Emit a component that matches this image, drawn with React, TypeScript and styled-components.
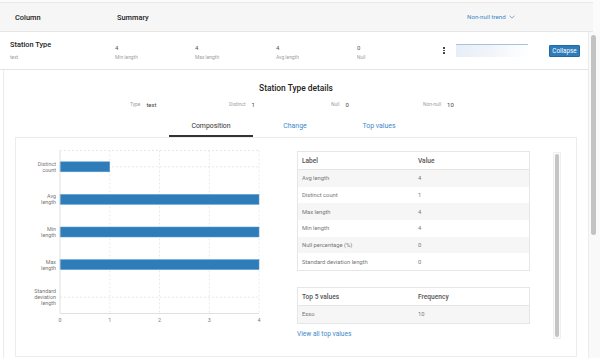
import React from 'react';
import styled, { createGlobalStyle } from 'styled-components';

const Global = createGlobalStyle`
  html, body { margin: 0; padding: 0; background: #fff; }
  body { font-family: Roboto, "Noto Sans", Arial, sans-serif; color: #333; overflow: hidden; }
  * { box-sizing: border-box; }
`;

const Page = styled.div`
  width: 600px;
  height: 358px;
  overflow: hidden;
  display: flex;
  flex-direction: column;
  padding-top: 2px;
  background: #fbfbfb;
`;

const Header = styled.div`
  height: 30px;
  margin-right: 7px;
  background: #f6f6f6;
  border-top: 1px solid #e9e9e9;
  border-bottom: 1px solid #e6e6e6;
  display: grid;
  grid-template-columns: 102px 350px 1fr;
  align-items: center;
  padding-left: 15px;
`;

const HeadCell = styled.div`
  font-size: 7.4px;
  font-weight: 500;
  color: #222;
`;

const TrendSelect = styled.div`
  font-size: 6.2px;
  color: #3d8acb;
  display: flex;
  align-items: center;
  gap: 3px;
`;

const Body = styled.div`
  flex: 1;
  display: flex;
  min-height: 0;
`;

const Main = styled.div`
  flex: 1;
  display: flex;
  flex-direction: column;
  background: #fff;
`;

const Track = styled.div`
  width: 12px;
  background: #f9f9f9;
  border-left: 1px solid #ececec;
  padding: 3px 0 0 2px;
`;

const Thumb = styled.div`
  width: 5px;
  height: 200px;
  border-radius: 3px;
  background: #c2c2c2;
`;

const Row = styled.div`
  height: 38px;
  border-bottom: 1px solid #e4e4e4;
  display: grid;
  grid-template-columns: 105px 80px 81px 81px 86px 13px 72px 21px 31px;
  align-items: center;
  padding-left: 10px;
  background: #fff;
`;

const NameBlock = styled.div`
  display: flex;
  flex-direction: column;
  gap: 5px;
  margin-top: -2px;
`;

const ColName = styled.div`
  font-size: 7.4px;
  font-weight: 500;
  color: #222;
`;

const SubLabel = styled.div`
  font-size: 4.9px;
  color: #a0a0a0;
`;

const Metric = styled.div`
  display: flex;
  flex-direction: column;
  gap: 3px;
  margin-top: 3px;
`;

const MetricValue = styled.div`
  font-size: 6px;
  color: #555;
`;

const Kebab = styled.div`
  display: flex;
  flex-direction: column;
  gap: 1px;
  align-items: flex-start;
  span {
    width: 1.6px;
    height: 1.6px;
    background: #444;
    display: block;
  }
`;

const Trend = styled.div`
  height: 13px;
  border-top: 1px solid #a8c2da;
  background: linear-gradient(to right, #e6eef7, #f1f5fa 50%, #ffffff);
`;

const CollapseBtn = styled.button`
  grid-column: 9;
  height: 12px;
  width: 31px;
  padding: 0;
  font-family: inherit;
  font-size: 6.3px;
  color: #fff;
  background: #2f7cba;
  border: 1px solid #2269a3;
  border-radius: 1px;
`;

const Details = styled.div`
  flex: 1;
  margin-left: 3px;
  border-left: 1px solid #ebebeb;
  display: flex;
  flex-direction: column;
  align-items: stretch;
  padding-top: 13px;
`;

const Title = styled.div`
  text-align: center;
  font-size: 8.4px;
  font-weight: 500;
  line-height: 10px;
  color: #222;
`;

const Stats = styled.div`
  margin-top: 6px;
  height: 10px;
  display: grid;
  grid-template-columns: 99px 102px 92px 100px;
  padding-left: 126px;
  align-items: center;
`;

const Stat = styled.div`
  display: flex;
  align-items: center;
  gap: 6px;
`;

const StatLabel = styled.span`
  font-size: 4.9px;
  color: #a0a0a0;
`;

const StatValue = styled.span`
  font-size: 6px;
  color: #444;
`;

const Tabs = styled.div`
  margin-top: 8px;
  display: flex;
  justify-content: center;
  padding-right: 2px;
`;

const Tab = styled.div<{ $active?: boolean }>`
  width: 84px;
  height: 20px;
  display: flex;
  align-items: center;
  justify-content: center;
  font-size: 6.9px;
  color: ${p => (p.$active ? '#333' : '#3d8acb')};
  border-bottom: 2px solid ${p => (p.$active ? '#333' : 'transparent')};
`;

const Card = styled.div`
  margin: 0 11px;
  height: 220px;
  border: 1px solid #ececec;
  display: grid;
  grid-template-columns: 281px 233px 1fr;
`;

const ChartSvg = styled.svg`
  display: block;
`;

const Tables = styled.div`
  padding-top: 13px;
  display: flex;
  flex-direction: column;
`;

const Table = styled.div<{ $gap?: number }>`
  border: 1px solid #e6e6e6;
  margin-top: ${p => p.$gap ?? 0}px;
`;

const TRow = styled.div<{ $head?: boolean; $shade?: boolean; $h?: number }>`
  height: ${p => p.$h ?? 16.7}px;
  display: grid;
  grid-template-columns: 116px 1fr;
  align-items: center;
  padding-left: 4px;
  background: ${p => (p.$shade ? '#f6f6f6' : '#fff')};
  border-bottom: ${p => (p.$head ? '1px solid #e6e6e6' : 'none')};
  font-size: ${p => (p.$head ? '6.6px' : '5.8px')};
  font-weight: ${p => (p.$head ? 500 : 400)};
  color: ${p => (p.$head ? '#555' : '#777')};
`;

const Link = styled.div`
  margin-top: 6px;
  font-size: 6.6px;
  color: #3d8acb;
`;

const InnerScroll = styled.div`
  margin: 14px 0 0 23px;
  width: 8px;
  height: 187px;
  background: #fafafa;
  border: 1px solid #f0f0f0;
  padding: 1px;
`;

const InnerThumb = styled.div`
  height: 100%;
  width: 4px;
  border-radius: 2px;
  background: #c4c4c4;
`;

const Chevron = () => (
  <svg width="6" height="4" viewBox="0 0 6 4">
    <path d="M0.5 0.7 L3 3.2 L5.5 0.7" fill="none" stroke="#3d8acb" strokeWidth="0.7" />
  </svg>
);

type Bar = { label: string[]; value: number };
const bars: Bar[] = [
  { label: ['Distinct', 'count'], value: 1 },
  { label: ['Avg', 'length'], value: 4 },
  { label: ['Min', 'length'], value: 4 },
  { label: ['Max', 'length'], value: 4 },
  { label: ['Standard', 'deviation', 'length'], value: 0 },
];

const Chart = () => {
  const x0 = 44;
  const x1 = 243;
  const y0 = 12.5;
  const y1 = 175.5;
  const unit = (x1 - x0) / 4;
  const band = (y1 - y0) / bars.length;
  return (
    <ChartSvg width="281" height="200" viewBox="0 0 281 200">
      <g stroke="#e0e0e0" strokeWidth="0.7" strokeDasharray="2 2" fill="none">
        <line x1={x0} y1={y0} x2={x1} y2={y0} />
        {[1, 2, 3, 4].map(i => (
          <line key={i} x1={x0 + unit * i} y1={y0} x2={x0 + unit * i} y2={y1} />
        ))}
        {bars.map((b, i) => (
          <line key={i} x1={x0} y1={y0 + band * (i + 0.5)} x2={x1} y2={y0 + band * (i + 0.5)} />
        ))}
      </g>
      {bars.map((b, i) => {
        const cy = y0 + band * (i + 0.5);
        return b.value > 0 ? (
          <rect key={i} x={x0} y={cy - 5} width={unit * b.value} height={10} fill="#2e7dba" stroke="#5a9bcd" strokeWidth="0.5" />
        ) : null;
      })}
      <g stroke="#d8d8d8" strokeWidth="0.8">
        <line x1={x0} y1={y0} x2={x0} y2={y1} />
        <line x1={x0} y1={y1} x2={x1} y2={y1} />
      </g>
      <g fontFamily="Roboto, Arial, sans-serif" fontSize="5.4" fill="#777">
        {bars.map((b, i) => {
          const cy = y0 + band * (i + 0.5);
          const start = cy - ((b.label.length - 1) * 6) / 2;
          return (
            <text key={i} x={x0 - 4} textAnchor="end">
              {b.label.map((l, j) => (
                <tspan key={j} x={x0 - 4} y={start + j * 6 + 2}>
                  {l}
                </tspan>
              ))}
            </text>
          );
        })}
        {[0, 1, 2, 3, 4].map(i => (
          <text key={i} x={x0 + unit * i} y={y1 + 8} textAnchor="middle">
            {i}
          </text>
        ))}
      </g>
    </ChartSvg>
  );
};

const summary = [
  { value: '4', label: 'Min length' },
  { value: '4', label: 'Max length' },
  { value: '4', label: 'Avg length' },
  { value: '0', label: 'Null' },
];

const stats = [
  { label: 'Type', value: 'text' },
  { label: 'Distinct', value: '1' },
  { label: 'Null', value: '0' },
  { label: 'Non-null', value: '10' },
];

const rows = [
  ['Avg length', '4'],
  ['Distinct count', '1'],
  ['Max length', '4'],
  ['Min length', '4'],
  ['Null percentage (%)', '0'],
  ['Standard deviation length', '0'],
];

export default function App() {
  return (
    <>
      <Global />
      <Page>
        <Header>
          <HeadCell>Column</HeadCell>
          <HeadCell>Summary</HeadCell>
          <TrendSelect>
            Non-null trend <Chevron />
          </TrendSelect>
        </Header>
        <Body>
          <Main>
            <Row>
              <NameBlock>
                <ColName>Station Type</ColName>
                <SubLabel>text</SubLabel>
              </NameBlock>
              {summary.map((s, i) => (
                <Metric key={i}>
                  <MetricValue>{s.value}</MetricValue>
                  <SubLabel>{s.label}</SubLabel>
                </Metric>
              ))}
              <Kebab>
                <span />
                <span />
                <span />
              </Kebab>
              <Trend />
              <CollapseBtn>Collapse</CollapseBtn>
            </Row>
            <Details>
              <Title>Station Type details</Title>
              <Stats>
                {stats.map(s => (
                  <Stat key={s.label}>
                    <StatLabel>{s.label}</StatLabel>
                    <StatValue>{s.value}</StatValue>
                  </Stat>
                ))}
              </Stats>
              <Tabs>
                <Tab $active>Composition</Tab>
                <Tab>Change</Tab>
                <Tab>Top values</Tab>
              </Tabs>
              <Card>
                <Chart />
                <Tables>
                  <Table>
                    <TRow $head $h={18}>
                      <span>Label</span>
                      <span>Value</span>
                    </TRow>
                    {rows.map((r, i) => (
                      <TRow key={r[0]} $shade={i % 2 === 0}>
                        <span>{r[0]}</span>
                        <span>{r[1]}</span>
                      </TRow>
                    ))}
                  </Table>
                  <Table $gap={16}>
                    <TRow $head $h={18}>
                      <span>Top 5 values</span>
                      <span>Frequency</span>
                    </TRow>
                    <TRow $shade>
                      <span>Esso</span>
                      <span>10</span>
                    </TRow>
                  </Table>
                  <Link>View all top values</Link>
                </Tables>
                <InnerScroll>
                  <InnerThumb />
                </InnerScroll>
              </Card>
            </Details>
          </Main>
          <Track>
            <Thumb />
          </Track>
        </Body>
      </Page>
    </>
  );
}
